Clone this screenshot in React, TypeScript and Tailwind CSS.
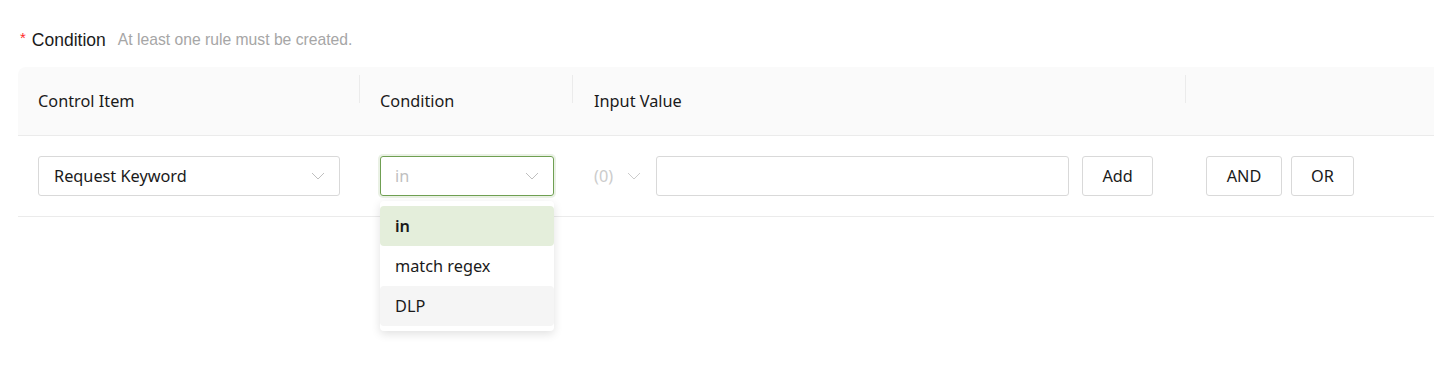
const sans = "font-['Segoe_UI','Noto_Sans','Liberation_Sans',sans-serif]";

function Chevron({ className }: { className?: string }) {
  return (
    <svg viewBox="0 0 14 8" className={className} fill="none" stroke="currentColor" strokeWidth="1">
      <path d="M1 1l6 6 6-6" />
    </svg>
  );
}

const options = [
  { label: 'in', active: true },
  { label: 'match regex' },
  { label: 'DLP', hover: true },
];

export default function App() {
  return (
    <div className={`min-h-[371px] bg-white pl-[18px] pt-[28px] ${sans}`}>
      {/* Label */}
      <div className="ml-[2px] flex h-[24px] items-center font-['Liberation_Sans',Arial,sans-serif]">
        <span className="mr-[6px] mt-[-4px] text-[15px] text-[#ff2a2a]">*</span>
        <span className="text-[17.5px] text-[#1a1a1a]">Condition</span>
        <span className="ml-[12px] text-[15.7px] text-[#a6a6a6]">At least one rule must be created.</span>
      </div>

      {/* Table */}
      <div className="mt-[15px] text-[16.3px] text-[#1a1a1a]">
        <div className="flex h-[69px] items-center rounded-tl-lg border-b border-[#ebebeb] bg-[#fafafa]">
          <div className="relative w-[342px] pl-[20px]">
            Control Item
            <span className="absolute right-0 top-[-14px] h-[28px] w-px bg-[#ebebeb]" />
          </div>
          <div className="relative w-[213px] pl-[20px]">
            Condition
            <span className="absolute right-0 top-[-14px] h-[28px] w-px bg-[#ebebeb]" />
          </div>
          <div className="relative w-[613px] pl-[21px]">
            Input Value
            <span className="absolute right-0 top-[-14px] h-[28px] w-px bg-[#ebebeb]" />
          </div>
          <div className="flex-1" />
        </div>

        <div className="flex h-[81px] items-center border-b border-[#ebebeb]">
          <div className="w-[342px] pl-[20px]">
            <div className="flex h-[40px] w-[302px] items-center justify-between rounded-[3px] border border-[#d9d9d9] pl-[15px] pr-[14px]">
              <span>Request Keyword</span>
              <Chevron className="h-[8px] w-[14px] text-[#bfbfbf]" />
            </div>
          </div>
          <div className="relative w-[213px] pl-[20px]">
            <div className="flex h-[40px] w-[174px] items-center justify-between rounded-[3px] border border-[#6f9f52] pl-[14px] pr-[14px] shadow-[0_0_0_2px_rgba(111,159,82,0.15)]">
              <span className="text-[#bfbfbf]">in</span>
              <Chevron className="h-[8px] w-[14px] text-[#bfbfbf]" />
            </div>
            <div className="absolute left-[20px] top-[45px] z-10 w-[174px] rounded-[4px] bg-white py-[5px] shadow-[0_3px_10px_rgba(0,0,0,0.12)]">
              {options.map((o) => (
                <div
                  key={o.label}
                  className={`flex h-[40px] items-center rounded-[4px] pl-[15px] ${
                    o.active ? 'bg-[#e4eedb] font-semibold' : o.hover ? 'bg-[#f5f5f5]' : ''
                  }`}
                >
                  {o.label}
                </div>
              ))}
            </div>
          </div>
          <div className="flex w-[613px] items-center pl-[21px]">
            <span className="text-[#cccccc]">(0)</span>
            <Chevron className="ml-[14px] h-[8px] w-[14px] text-[#cccccc]" />
            <div className="ml-[15px] h-[40px] w-[413px] rounded-[3px] border border-[#d9d9d9]" />
            <button className="ml-[13px] flex h-[40px] w-[71px] items-center justify-center rounded-[3px] border border-[#d9d9d9] bg-white">
              Add
            </button>
          </div>
          <div className="flex flex-1 items-center gap-[9px] pl-[20px]">
            <button className="flex h-[40px] w-[76px] items-center justify-center rounded-[3px] border border-[#d9d9d9] bg-white">
              AND
            </button>
            <button className="flex h-[40px] w-[63px] items-center justify-center rounded-[3px] border border-[#d9d9d9] bg-white">
              OR
            </button>
          </div>
        </div>
      </div>
    </div>
  );
}
